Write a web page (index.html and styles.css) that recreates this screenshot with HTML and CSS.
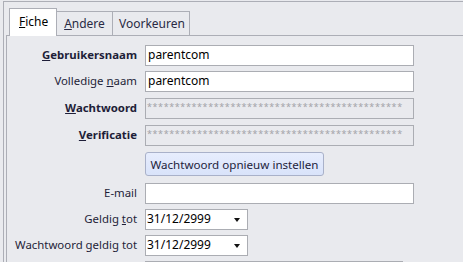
FILE: index.html
```html
<!DOCTYPE html>
<html lang="nl">
  <head>
    <meta charset="UTF-8" />
    <title>Gebruiker</title>
    <link rel="stylesheet" href="styles.css">
  </head>
  <body>
    <div class="frame">
      <!-- Tabbladen -->
      <ul class="tabs">
        <li class="tab active"><u>F</u>iche</li>
        <li class="tab"><u>A</u>ndere</li>
        <li class="tab">Voorkeuren</li>
      </ul>

      <div class="panel">
        <div class="form">
          <label class="bold"><u>G</u>ebruikersnaam</label>
          <div class="field">parentcom</div>

          <label>Volledige <u>n</u>aam</label>
          <div class="field">parentcom</div>

          <label class="bold"><u>W</u>achtwoord</label>
          <div class="field disabled">**********************************************</div>

          <label class="bold"><u>V</u>erificatie</label>
          <div class="field disabled">**********************************************</div>

          <span></span>
          <div><button class="btn">Wachtwoord opnieuw instellen</button></div>

          <label>E-mail</label>
          <div class="field"></div>

          <label>Geldig <u>t</u>ot</label>
          <div class="field combo">31/12/2999<span class="arrow"></span></div>

          <label>Wachtwoord geldig tot</label>
          <div class="field combo">31/12/2999<span class="arrow"></span></div>

          <span></span>
          <div class="grid-top">
            <span class="cell c1"></span>
            <span class="cell c2"></span>
            <span class="cell c3"></span>
          </div>
        </div>
      </div>
    </div>
  </body>
</html>
```

FILE: styles.css
```css
/* Basis */
html, body {
  height: 262px;
  overflow: hidden;
}

body {
  margin: 0;
  background-color: #e9eaee;
  font-family: "Noto Sans", "Open Sans", sans-serif;
  font-size: 11.4px;
  color: #1e1e38;
}

.frame {
  box-sizing: border-box;
  margin: 1px 0 0 3px;
  height: 261px;
  border-top: 1px solid #acaeb6;
  border-left: 1px solid #acaeb6;
  padding: 5px 0 0 2px;
}

/* Tabs */
.tabs {
  list-style-type: none;
  margin: 0 0 0 3px;
  padding: 0;
  display: flex;
  align-items: flex-end;
  height: 28px;
  position: relative;
  z-index: 1;
}

.tab {
  height: 24px;
  line-height: 23px;
  padding: 0 6px;
  border: 1px solid #acaeb6;
  border-bottom: none;
  margin-left: -1px;
  box-sizing: border-box;
  color: #2a2a44;
  font-size: 12px;
}

.tab:nth-child(2) {
  width: 57px;
  text-align: center;
}

.tab:nth-child(3) {
  width: 78px;
  text-align: center;
}

.tab.active {
  height: 28px;
  width: 48px;
  margin-left: 0;
  margin-bottom: -1px;
  background-color: #fff;
  line-height: 26px;
  padding: 0 0 0 9px;
  color: #000;
}

.panel {
  box-sizing: border-box;
  border-top: 1px solid #acaeb6;
  border-left: 1px solid #acaeb6;
  height: 227px;
  padding-top: 9px;
}

/* Formulier */
.form {
  display: grid;
  grid-template-columns: 130px 269px;
  grid-template-rows: 21px 22px 22px 22px 26px 21px 21px 21px 4px;
  column-gap: 8px;
  row-gap: 5px;
  align-items: start;
}

.form label {
  text-align: right;
  line-height: 20px;
  white-space: nowrap;
}

.form label.bold {
  font-weight: bold;
}

.field {
  box-sizing: border-box;
  height: 21px;
  border: 1px solid #abadb3;
  background-color: #fff;
  padding-left: 2px;
  line-height: 18px;
  font-size: 12px;
  color: #000;
  overflow: hidden;
  white-space: nowrap;
}

.field.disabled {
  background-color: #e9eaee;
  color: #a3a3a8;
  font-size: 9px;
  letter-spacing: 0.6px;
  line-height: 16px;
  padding-left: 1px;
}

.field.combo {
  width: 103px;
  position: relative;
  padding-left: 1px;
}

.arrow {
  position: absolute;
  right: 7px;
  top: 8px;
  border-left: 3px solid transparent;
  border-right: 3px solid transparent;
  border-top: 4px solid #111;
}

.btn {
  display: block;
  height: 24px;
  width: 179px;
  border: 1px solid #a9b1c9;
  border-radius: 3px;
  background: linear-gradient(#e7edfd, #d9e3fa);
  font-family: inherit;
  font-size: 11.6px;
  color: #1e1e3c;
  padding: 0;
}

.grid-top {
  display: flex;
  height: 4px;
  width: 258px;
  border-top: 1px solid #abadb3;
}

.cell {
  border-left: 1px solid #abadb3;
}

.c1 { width: 11px; }
.c2 { width: 65px; }
.c3 { width: 180px; }
```
